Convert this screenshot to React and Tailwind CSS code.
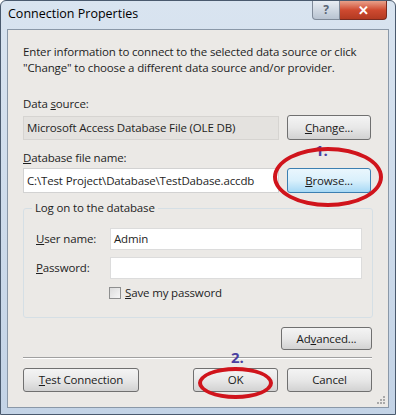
import React from "react";

const font = { fontFamily: '"Open Sans", "Noto Sans", Arial, sans-serif' };

function Btn({ children, className = "", hot = false }) {
  return (
    <div
      className={`flex items-center justify-center rounded-[3px] border text-[#1a1a1a] ${
        hot
          ? "border-[#3c7fb1] bg-gradient-to-b from-[#eaf6fd] via-[#d9f0fc] to-[#a7d9f5]"
          : "border-[#707070] bg-gradient-to-b from-[#f4f4f4] via-[#e8e8e8] to-[#d2d2d2]"
      } ${className}`}
    >
      {children}
    </div>
  );
}

function Ellipse({ className }) {
  return (
    <div
      className={`pointer-events-none absolute rounded-[50%] border-[4px] border-[#d0141c] ${className}`}
    />
  );
}

export default function App() {
  return (
    <div
      style={font}
      className="relative h-[415px] w-[396px] overflow-hidden rounded-t-[6px] border border-[#4a5a6e] bg-gradient-to-b from-[#d9e4f0] to-[#c3d3e6] text-[11.5px] leading-[16px] tracking-[-0.15px] text-[#1e1e1e]"
    >
      {/* Title bar */}
      <div className="flex h-[28px] items-start justify-between">
        <div className="pl-[7px] pt-[5px] text-[12.5px] tracking-normal text-black">Connection Properties</div>
        <div className="mr-[8px] flex">
          <div className="flex h-[19px] w-[28px] items-center justify-center rounded-bl-[4px] border border-t-0 border-[#7f8a99] bg-gradient-to-b from-[#e8edf3] to-[#b8c3d1] text-[12px] font-bold text-[#5a6575]">
            ?
          </div>
          <div className="flex h-[19px] w-[47px] items-center justify-center rounded-br-[4px] border border-l-0 border-t-0 border-[#7a2a1f] bg-gradient-to-b from-[#e8a08a] via-[#cf4a30] to-[#b33a22] text-[13px] font-bold text-white">
            ✕
          </div>
        </div>
      </div>

      {/* Client area */}
      <div className="mx-[6px] h-[379px] border border-[#8a98a8] bg-[#ebe9e6] px-[15px] pt-[14px]">
        <p>
          Enter information to connect to the selected data source or click
          <br />
          "Change" to choose a different data source and/or provider.
        </p>

        <div className="mt-[20px]">
          Data <u>s</u>ource:
        </div>
        <div className="mt-[3px] flex items-center gap-[8px]">
          <div className="flex h-[24px] w-[256px] items-center border border-[#d6d4d1] bg-[#e4e2df] px-[3px]">
            Microsoft Access Database File (OLE DB)
          </div>
          <Btn className="h-[25px] w-[84px]">
            <span>
              <u>C</u>hange...
            </span>
          </Btn>
        </div>

        <div className="mt-[10px]">
          <u>D</u>atabase file name:
        </div>
        <div className="mt-[2px] flex items-center gap-[8px]">
          <div className="flex h-[25px] w-[256px] items-center border border-[#d2d2d2] bg-white px-[3px]">
            C:\Test Project\Database\TestDabase.accdb
          </div>
          <Btn hot className="h-[25px] w-[84px]">
            <span>
              <u>B</u>rowse...
            </span>
          </Btn>
        </div>

        {/* Group box */}
        <fieldset className="mt-[7px] w-[349px] rounded-[3px] border border-[#d5dfe5] pb-[16px] pl-[12px] pr-[10px]">
          <legend className="ml-[-4px] px-[3px]">Log on to the database</legend>
          <div className="mt-[12px] flex items-center">
            <div className="w-[74px]">
              <u>U</u>ser name:
            </div>
            <div className="flex h-[22px] w-[252px] items-center border border-[#dcdcdc] bg-white px-[3px]">
              Admin
            </div>
          </div>
          <div className="mt-[7px] flex items-center">
            <div className="w-[74px]">
              <u>P</u>assword:
            </div>
            <div className="h-[22px] w-[252px] border border-[#dcdcdc] bg-white" />
          </div>
          <div className="ml-[73px] mt-[6px] flex items-center gap-[4px]">
            <div className="h-[12px] w-[12px] border border-[#8e8f8f] bg-gradient-to-br from-[#dcdcdc] to-[#f6f6f6]" />
            <span>
              <u>S</u>ave my password
            </span>
          </div>
        </fieldset>

        <div className="mt-[9px] flex w-[349px] justify-end">
          <Btn className="h-[23px] w-[91px]">
            <span>
              Ad<u>v</u>anced...
            </span>
          </Btn>
        </div>

        <div className="mt-[7px] h-[2px] w-[349px] border-t border-b border-t-[#a0a0a0] border-b-white" />

        <div className="mt-[9px] flex w-[349px] items-center">
          <Btn className="h-[24px] w-[116px]">
            <span>
              <u>T</u>est Connection
            </span>
          </Btn>
          <div className="flex-1" />
          <Btn className="h-[24px] w-[85px]">OK</Btn>
          <Btn className="ml-[9px] h-[24px] w-[85px]">Cancel</Btn>
        </div>
      </div>

      {/* Resize grip */}
      <div className="absolute bottom-[10px] right-[10px] grid grid-cols-3 gap-[1px]">
        {[0, 0, 1, 0, 1, 1, 1, 1, 1].map((v, i) => (
          <div key={i} className={`h-[2px] w-[2px] ${v ? "bg-[#a9a9a9]" : ""}`} />
        ))}
      </div>

      {/* Annotations */}
      <div className="absolute left-[314px] top-[141px] text-[15px] font-bold text-[#4a3fa0]">1.</div>
      <Ellipse className="left-[272px] top-[146px] h-[60px] w-[110px]" />
      <div className="absolute left-[230px] top-[348px] text-[15px] font-bold text-[#4a3fa0]">2.</div>
      <Ellipse className="left-[197px] top-[366px] h-[32px] w-[75px]" />
    </div>
  );
}
